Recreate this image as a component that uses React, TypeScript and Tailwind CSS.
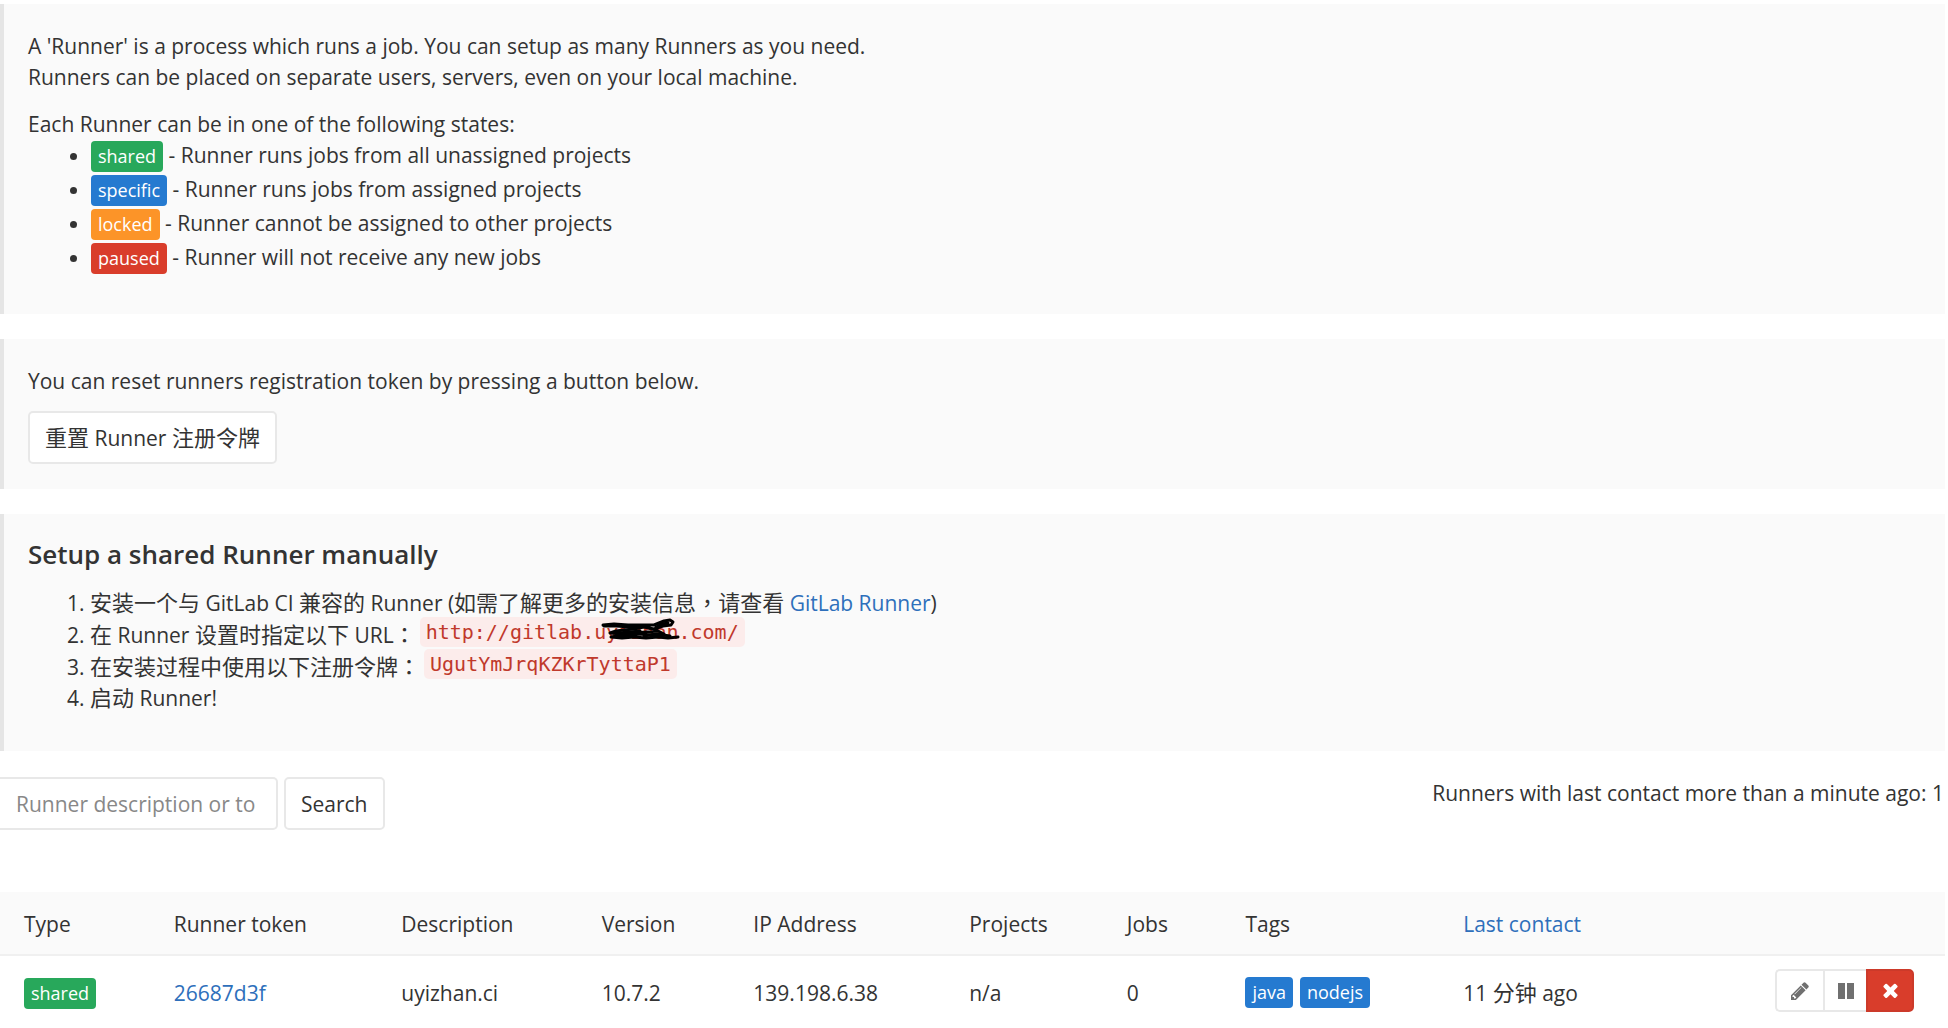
import type { ReactNode } from 'react';

const badgeColors = {
  green: 'bg-[#28a85b]',
  blue: 'bg-[#257ad0]',
  orange: 'bg-[#fc9428]',
  red: 'bg-[#d93d2b]',
};

type BadgeColor = keyof typeof badgeColors;

const states: { name: string; color: BadgeColor; text: string }[] = [
  { name: 'shared', color: 'green', text: 'Runner runs jobs from all unassigned projects' },
  { name: 'specific', color: 'blue', text: 'Runner runs jobs from assigned projects' },
  { name: 'locked', color: 'orange', text: 'Runner cannot be assigned to other projects' },
  { name: 'paused', color: 'red', text: 'Runner will not receive any new jobs' },
];

const columns = [
  { label: 'Type', width: 'w-[7.7%]' },
  { label: 'Runner token', width: 'w-[11.7%]' },
  { label: 'Description', width: 'w-[10.3%]' },
  { label: 'Version', width: 'w-[7.8%]' },
  { label: 'IP Address', width: 'w-[11.1%]' },
  { label: 'Projects', width: 'w-[8.1%]' },
  { label: 'Jobs', width: 'w-[6.1%]' },
  { label: 'Tags', width: 'w-[11.2%]' },
];

function Badge({ color, children }: { color: BadgeColor; children: ReactNode }) {
  return (
    <span
      className={`inline-block h-[31px] rounded-[4px] px-[7px] text-[18px] leading-[31px] text-white ${badgeColors[color]}`}
    >
      {children}
    </span>
  );
}

function Panel({ className, children }: { className: string; children: ReactNode }) {
  return (
    <section className={`mr-[3px] border-l-4 border-[#e5e5e5] bg-[#fafafa] pl-6 pr-6 ${className}`}>
      {children}
    </section>
  );
}

/* Chinese runs are set one size up so that they balance the Latin text. */
function Zh({ children }: { children: ReactNode }) {
  return (
    <span lang="zh-CN" className="text-[22px]">
      {children}
    </span>
  );
}

/* Full-width punctuation centred in its cell. */
function Mark({ children }: { children: ReactNode }) {
  return <span className="font-['Noto_Sans_CJK_TC',sans-serif] text-[22px]">{children}</span>;
}

function Code({ children }: { children: ReactNode }) {
  return (
    <code className="relative ml-1 inline-block h-[30px] rounded-[5px] bg-[#fceceb] px-[6px] align-top font-['DejaVu_Sans_Mono',monospace] text-[20px] leading-[30px] text-[#c0392b]">
      {children}
    </code>
  );
}

function Scribble() {
  return (
    <svg
      className="absolute top-0 left-[180px]"
      width="80"
      height="26"
      viewBox="0 0 80 26"
      fill="none"
      stroke="#000"
      strokeWidth="3"
      strokeLinecap="round"
      strokeLinejoin="round"
      aria-hidden="true"
    >
      <path d="M3 8 14 7 28 8 42 8 54 8 64 4 70 3 73 5 71 8 63 9 54 12 44 10 34 12 24 13 16 14 10 16 22 17 34 16 46 15 58 14 64 17 54 18 42 17 30 18 18 19 11 20 22 21 34 20 46 21 58 20 68 21 78 20" />
      <path d="M4 9 16 9 30 10 44 9 50 11M56 10 62 7 68 6M18 16 30 15 40 14M44 19 56 17 70 19" />
    </svg>
  );
}

export default function App() {
  return (
    <main className="bg-white pt-1 font-['Open_Sans','Noto_Sans_CJK_SC',sans-serif] text-[21px] leading-[32px] text-[#333]">
      <Panel className="pt-[27px] pb-[39px]">
        <p className="leading-[31px]">
          A 'Runner' is a process which runs a job. You can setup as many Runners as you need.
          <br />
          Runners can be placed on separate users, servers, even on your local machine.
        </p>
        <p className="mt-4 leading-[30px]">Each Runner can be in one of the following states:</p>
        <ul className="list-disc pl-[63px]">
          {states.map((s) => (
            <li key={s.name} className="h-[34px] leading-[33px]">
              <Badge color={s.color}>{s.name}</Badge> - {s.text}
            </li>
          ))}
        </ul>
      </Panel>

      <Panel className="mt-[25px] pt-[26px] pb-[25px]">
        <p>You can reset runners registration token by pressing a button below.</p>
        <button
          type="button"
          className="mt-[14px] block h-[53px] rounded-[5px] border-2 border-[#e8e8e8] bg-white px-[15px]"
        >
          <Zh>重置</Zh> Runner <Zh>注册令牌</Zh>
        </button>
      </Panel>

      <Panel className="mt-[25px] pt-6 pb-[38px]">
        <h4 className="text-[26px] font-semibold leading-[32px]">Setup a shared Runner manually</h4>
        <ol className="mt-[15px] list-decimal pl-[62px]">
          <li className="h-8">
            <Zh>安装一个与</Zh> GitLab CI <Zh>兼容的</Zh> Runner (<Zh>如需了解更多的安装信息</Zh>
            <Mark>，</Mark>
            <Zh>请查看</Zh>{' '}
            <a href="#gitlab-runner" className="text-[#2e6fbb]">
              GitLab Runner
            </a>
            )
          </li>
          <li className="h-8">
            <Zh>在</Zh> Runner <Zh>设置时指定以下</Zh> URL<Mark>：</Mark>
            <Code>
              http://gitlab.uyizhan.com/
              <Scribble />
            </Code>
          </li>
          <li className="h-8">
            <Zh>在安装过程中使用以下注册令牌</Zh>
            <Mark>：</Mark>
            <Code>UgutYmJrqKZKrTyttaP1</Code>
          </li>
          <li className="h-8">
            <Zh>启动</Zh> Runner!
          </li>
        </ol>
      </Panel>

      <div className="mt-[26px] flex items-start justify-between pr-1">
        <form className="flex gap-[6px]" onSubmit={(e) => e.preventDefault()}>
          <input
            type="text"
            aria-label="Runner description or token"
            placeholder="Runner description or token"
            className="h-[53px] w-[278px] rounded-r-[5px] border-2 border-l-0 border-[#e8e8e8] bg-white pt-px pl-4 pr-5 placeholder:text-[#888] placeholder:opacity-100"
          />
          <button
            type="submit"
            className="h-[53px] rounded-[5px] border-2 border-[#e8e8e8] bg-white px-[15px] pt-px"
          >
            Search
          </button>
        </form>
        <p>Runners with last contact more than a minute ago: 1</p>
      </div>

      <div className="mt-[62px] mr-[3px]">
        <table className="w-full table-fixed border-collapse text-left">
          <thead>
            <tr className="h-[63px] border-b-2 border-[#f0f0f0] bg-[#fafafa]">
              {columns.map((c) => (
                <th key={c.label} scope="col" className={`${c.width} pt-[2px] pl-6 font-normal`}>
                  {c.label}
                </th>
              ))}
              <th scope="col" className="w-[16%] pt-[2px] pl-6 font-normal">
                <a href="#last-contact" className="text-[#2e6fbb]">
                  Last contact
                </a>
              </th>
              <th scope="col" aria-label="Actions" />
            </tr>
          </thead>
          <tbody>
            <tr className="h-[73px]">
              <td className="pl-6">
                <Badge color="green">shared</Badge>
              </td>
              <td className="pt-px pl-6">
                <a href="#26687d3f" className="text-[#2e6fbb]">
                  26687d3f
                </a>
              </td>
              <td className="pt-px pl-6">uyizhan.ci</td>
              <td className="pt-px pl-6">10.7.2</td>
              <td className="pt-px pl-6">139.198.6.38</td>
              <td className="pt-px pl-6">n/a</td>
              <td className="pt-px pl-6">0</td>
              <td className="pl-6">
                <div className="flex gap-[7px]">
                  <Badge color="blue">java</Badge>
                  <Badge color="blue">nodejs</Badge>
                </div>
              </td>
              <td className="pt-px pl-6">
                11 <Zh>分钟</Zh> ago
              </td>
              <td className="pr-[31px] pb-[3px]">
                <div className="flex justify-end text-[#707070]">
                  <a
                    href="#edit"
                    aria-label="Edit"
                    className="flex h-[43px] w-[48px] items-center justify-center rounded-l-[5px] border-2 border-r-0 border-[#e8e8e8]"
                  >
                    <svg width="18" height="18" viewBox="0 128 1536 1536" fill="currentColor" aria-hidden="true">
                      <path d="M363 1536l91-91-235-235-91 91v107h128v128h107zM886 608q0-22-22-22-10 0-17 7l-542 542q-7 7-7 17 0 22 22 22 10 0 17-7l542-542q7-7 7-17zM832 416l416 416-832 832h-416v-416zM1515 512q0 53-37 90l-166 166-416-416 166-165q36-38 90-38 53 0 91 38l235 234q37 39 37 91z" />
                    </svg>
                  </a>
                  <button
                    type="button"
                    aria-label="Pause"
                    className="flex h-[43px] w-[43px] items-center justify-center border-2 border-r-0 border-[#e8e8e8]"
                  >
                    <svg width="16" height="16" viewBox="0 0 16 16" fill="currentColor" aria-hidden="true">
                      <path d="M0 0h7v16H0zM9 0h7v16H9z" />
                    </svg>
                  </button>
                  <button
                    type="button"
                    aria-label="Remove"
                    className="flex h-[43px] w-[48px] items-center justify-center rounded-r-[5px] border-2 border-[#cc3a2a] bg-[#d93d2b] text-white"
                  >
                    <svg width="15" height="15" viewBox="110 302 1188 1252" fill="currentColor" aria-hidden="true">
                      <path d="M1298 1322q0 40-28 68l-136 136q-28 28-68 28t-68-28l-294-294-294 294q-28 28-68 28t-68-28l-136-136q-28-28-28-68t28-68l294-294-294-294q-28-28-28-68t28-68l136-136q28-28 68-28t68 28l294 294 294-294q28-28 68-28t68 28l136 136q28 28 28 68t-28 68l-294 294 294 294q28 28 28 68z" />
                    </svg>
                  </button>
                </div>
              </td>
            </tr>
          </tbody>
        </table>
      </div>
    </main>
  );
}
